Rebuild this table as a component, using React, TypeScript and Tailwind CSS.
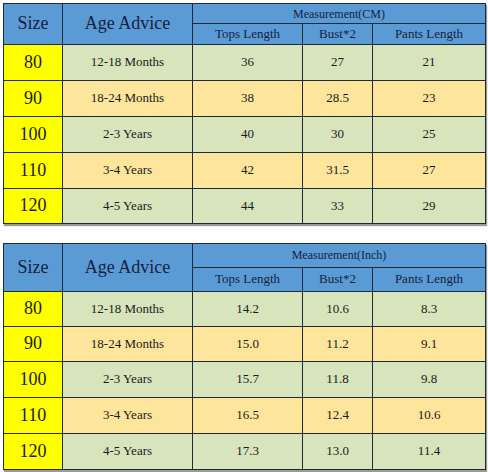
import React from 'react';

type Row = { size: string; age: string; tops: string; bust: string; pants: string };

const cmRows: Row[] = [
  { size: '80', age: '12-18 Months', tops: '36', bust: '27', pants: '21' },
  { size: '90', age: '18-24 Months', tops: '38', bust: '28.5', pants: '23' },
  { size: '100', age: '2-3 Years', tops: '40', bust: '30', pants: '25' },
  { size: '110', age: '3-4 Years', tops: '42', bust: '31.5', pants: '27' },
  { size: '120', age: '4-5 Years', tops: '44', bust: '33', pants: '29' },
];

const inchRows: Row[] = [
  { size: '80', age: '12-18 Months', tops: '14.2', bust: '10.6', pants: '8.3' },
  { size: '90', age: '18-24 Months', tops: '15.0', bust: '11.2', pants: '9.1' },
  { size: '100', age: '2-3 Years', tops: '15.7', bust: '11.8', pants: '9.8' },
  { size: '110', age: '3-4 Years', tops: '16.5', bust: '12.4', pants: '10.6' },
  { size: '120', age: '4-5 Years', tops: '17.3', bust: '13.0', pants: '11.4' },
];

const cell =
  "border border-[#1e2a36] text-center p-0 font-['Liberation_Serif','Times_New_Roman',serif]";

const SizeTable: React.FC<{
  unit: string;
  rows: Row[];
  subH: string;
  rowHeights: string[];
}> = ({ unit, rows, subH, rowHeights }) => (
  <table className="border-collapse table-fixed w-[482px] text-[#1b1b1b] shadow-[1px_2px_1px_#9a9a9a]">
    <colgroup>
      <col className="w-[59px]" />
      <col className="w-[130px]" />
      <col className="w-[110px]" />
      <col className="w-[70px]" />
      <col className="w-[113px]" />
    </colgroup>
    <thead className="bg-[#5b9bd5] text-[#15223d]">
      <tr className={subH}>
        <th rowSpan={2} className={`${cell} text-[18px] font-normal`}>Size</th>
        <th rowSpan={2} className={`${cell} text-[18px] font-normal`}>Age Advice</th>
        <th colSpan={3} className={`${cell} text-[12px] font-normal`}>
          Measurement({unit})
        </th>
      </tr>
      <tr className={subH}>
        <th className={`${cell} text-[13px] font-normal`}>Tops Length</th>
        <th className={`${cell} text-[13px] font-normal`}>Bust*2</th>
        <th className={`${cell} text-[13px] font-normal`}>Pants Length</th>
      </tr>
    </thead>
    <tbody>
      {rows.map((r, i) => {
        const bg = i % 2 === 0 ? 'bg-[#d8e4bc]' : 'bg-[#fee59c]';
        return (
          <tr key={r.size} className={rowHeights[i]}>
            <td className={`${cell} bg-[#ffff00] text-[18px]`}>{r.size}</td>
            <td className={`${cell} ${bg} text-[13px]`}>{r.age}</td>
            <td className={`${cell} ${bg} text-[13px]`}>{r.tops}</td>
            <td className={`${cell} ${bg} text-[13px]`}>{r.bust}</td>
            <td className={`${cell} ${bg} text-[13px]`}>{r.pants}</td>
          </tr>
        );
      })}
    </tbody>
  </table>
);

export default function App() {
  return (
    <div className="w-[488px] h-[472px] bg-white pl-[3px] pt-[3px] flex flex-col gap-[19px] font-['Liberation_Serif','Times_New_Roman',serif]">
      <SizeTable
        unit="CM"
        rows={cmRows}
        subH="h-[20px]"
        rowHeights={['h-[36px]', 'h-[36px]', 'h-[36px]', 'h-[36px]', 'h-[35px]']}
      />
      <SizeTable
        unit="Inch"
        rows={inchRows}
        subH="h-[24px]"
        rowHeights={['h-[35px]', 'h-[35px]', 'h-[36px]', 'h-[36px]', 'h-[36px]']}
      />
    </div>
  );
}
